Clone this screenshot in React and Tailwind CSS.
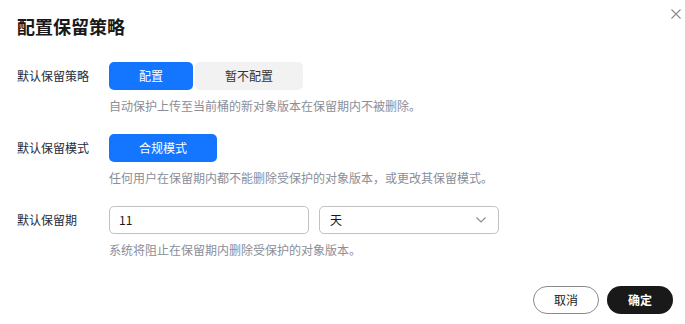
import React from 'react';

const font = { fontFamily: '"Noto Sans CJK SC", "Noto Sans", sans-serif' };

const Row = ({ label, children, hint }) => (
  <div className="flex">
    <div className="w-[92px] shrink-0 h-7 flex items-center text-xs text-[#252b3a]">{label}</div>
    <div className="flex flex-col">
      <div className="flex h-7">{children}</div>
      <p className="mt-[7px] h-[18px] leading-[18px] text-xs text-[#8a8e99]">{hint}</p>
    </div>
  </div>
);

const App = () => {
  return (
    <div className="relative w-[685px] h-[324px] bg-white overflow-hidden" style={font}>
      <button className="absolute right-[4px] top-[9px] w-[10px] h-[10px] text-[#8a8a8a]">
        <svg viewBox="0 0 10 10" width="10" height="10" fill="none" stroke="currentColor" strokeWidth="1.1">
          <path d="M0.5 0.5 L9.5 9.5 M9.5 0.5 L0.5 9.5" />
        </svg>
      </button>

      <div className="px-[17px] pt-[14px]">
        <h1 className="text-[18px] leading-6 font-bold text-[#191919]">配置保留策略</h1>

        <div className="mt-[24px] flex flex-col gap-[19px]">
          <Row label="默认保留策略" hint="自动保护上传至当前桶的新对象版本在保留期内不被删除。">
            <button className="w-[84px] h-7 rounded-[5px] bg-[#1476ff] text-white text-xs">配置</button>
            <button className="ml-[2px] w-[108px] h-7 rounded-[5px] bg-[#f2f2f2] text-[#333] text-xs">暂不配置</button>
          </Row>

          <Row label="默认保留模式" hint="任何用户在保留期内都不能删除受保护的对象版本，或更改其保留模式。">
            <button className="w-[108px] h-7 rounded-[5px] bg-[#1476ff] text-white text-xs">合规模式</button>
          </Row>

          <Row label="默认保留期" hint="系统将阻止在保留期内删除受保护的对象版本。">
            <div className="w-[200px] h-7 rounded-[5px] border border-[#c2c2c2] flex items-center px-[9px] text-xs text-[#191919]">11</div>
            <div className="ml-[10px] w-[180px] h-7 rounded-[5px] border border-[#c2c2c2] flex items-center justify-between pl-[10px] pr-[12px] text-xs text-[#191919]">
              <span>天</span>
              <svg viewBox="0 0 10 6" width="10" height="6" fill="none" stroke="#8a8a8a" strokeWidth="1.1">
                <path d="M0.5 0.5 L5 5 L9.5 0.5" />
              </svg>
            </div>
          </Row>
        </div>

        <div className="mt-[27px] flex justify-end gap-2 mr-[-5px]">
          <button className="w-[66px] h-7 rounded-full border border-[#8a8a8a] text-xs text-[#191919]">取消</button>
          <button className="w-[66px] h-7 rounded-full bg-[#191919] text-xs text-white font-semibold">确定</button>
        </div>
      </div>
    </div>
  );
};

export default App;
